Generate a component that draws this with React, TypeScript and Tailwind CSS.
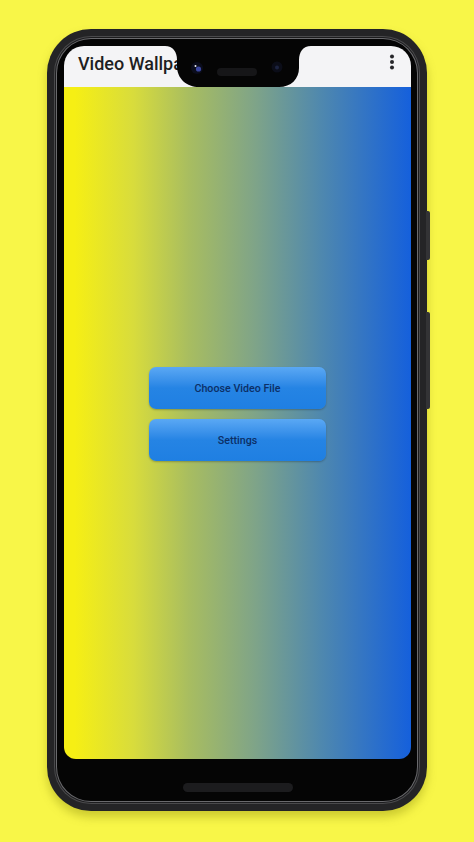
export default function App() {
  return (
    <div className="w-[474px] h-[842px] overflow-hidden bg-[#f8f648] pt-[29px] pl-[47px] font-['Roboto',sans-serif]">
      <div className="relative w-[380px] h-[782px] rounded-[44px] bg-[#242426] p-[7px] shadow-[0_6px_10px_rgba(120,120,0,0.35)]">
        <div className="absolute right-[-3px] top-[182px] w-[4px] h-[49px] rounded-r-[2px] bg-[#333335]" />
        <div className="absolute right-[-3px] top-[283px] w-[4px] h-[97px] rounded-r-[2px] bg-[#333335]" />
        <div className="h-full rounded-[37px] bg-[#4a4a4c] p-[1px]">
          <div className="h-full rounded-[36px] bg-[#1c1c1e] p-[1px]">
            <div className="h-full rounded-[35px] bg-[#6a6a6d] p-[1px]">
              <div className="relative h-full rounded-[34px] bg-[#050505] pl-[7px] pr-[6px] pt-[7px] pb-[42px]">
                <div className="flex flex-col h-full rounded-t-[20px] rounded-b-[12px] overflow-hidden">
                  <div className="h-[41px] shrink-0 bg-[#f4f4f6] flex items-center justify-between pl-[14px] pr-[16px]">
                    <span className="text-[18px] leading-none font-medium text-[#1e1e22] mt-[-6px]">Video Wallpaper</span>
                    <svg width="6" height="16" viewBox="0 0 6 16" className="mt-[-9px]" fill="#26262a">
                      <circle cx="3" cy="2.5" r="2" />
                      <circle cx="3" cy="8" r="2" />
                      <circle cx="3" cy="13.5" r="2" />
                    </svg>
                  </div>
                  <div className="flex-1 flex flex-col items-center justify-center gap-[10px] bg-[linear-gradient(90deg,#f6ef14_3%,#d8dc3c_20%,#a8bd60_36%,#7fa488_55%,#4f88ae_74%,#1560dc_100%)] pb-[19px]">
                    <button className="w-[177px] h-[42px] pt-[3px] rounded-[7px] bg-gradient-to-b from-[#5aa8f4] from-0% via-[#2584e4] via-50% to-[#1f7fe2] shadow-[0_1px_2px_rgba(0,0,0,0.25)] text-[10.7px] font-medium text-[#0c2f66]">
                      Choose Video File
                    </button>
                    <button className="w-[177px] h-[42px] pt-[3px] rounded-[7px] bg-gradient-to-b from-[#5aa8f4] from-0% via-[#2584e4] via-50% to-[#1f7fe2] shadow-[0_1px_2px_rgba(0,0,0,0.25)] text-[10.7px] font-medium text-[#0c2f66]">
                      Settings
                    </button>
                  </div>
                </div>
                <svg className="absolute left-[94px] top-[-1px]" width="184" height="50" viewBox="0 0 184 50">
                  <path d="M12 6 H162 V8 H160 C152 8 148 14 148 22 V30 C148 41 140 49 128 49 H48 C36 49 26 41 26 28 V22 C26 14 22 8 14 8 H12 Z" fill="#050505" />
                  <circle cx="46" cy="30" r="6" fill="#0b0d1c" />
                  <circle cx="47.5" cy="31" r="2.6" fill="#3a46a0" />
                  <circle cx="44.5" cy="28" r="1" fill="#f0f0f6" />
                  <rect x="66" y="30" width="40" height="8" rx="4" fill="#161618" />
                  <circle cx="126" cy="29" r="5.5" fill="#0b0d18" />
                  <circle cx="126" cy="29.5" r="2" fill="#1c2340" />
                </svg>
                <div className="absolute left-[126px] top-[744px] w-[110px] h-[9px] rounded-full bg-[#1c1c1e]" />
              </div>
            </div>
          </div>
        </div>
      </div>
    </div>
  );
}
